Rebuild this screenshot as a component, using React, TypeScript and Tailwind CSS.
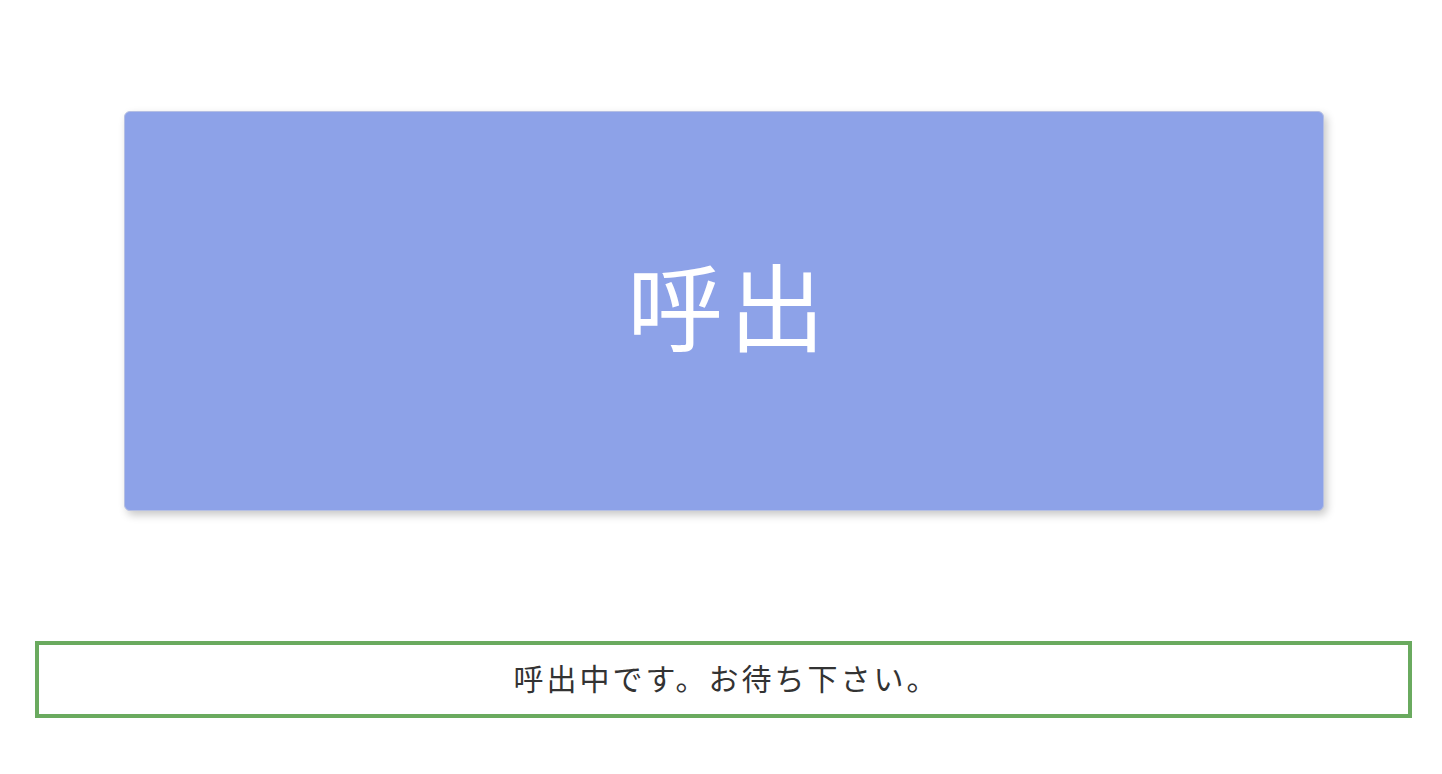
export default function App() {
  return (
    <div
      className="min-h-screen w-full bg-white pt-[111px]"
      style={{ fontFamily: '"Noto Sans CJK JP", "Noto Sans", sans-serif' }}
    >
      {/* Call button */}
      <div className="ml-[124px] w-[1200px]">
        <button
          type="button"
          className="flex h-[400px] w-full items-center justify-center rounded-md border border-[#b5bfe3] bg-[#8da2e8] pb-[16px] pl-[10px] text-[96px] leading-none tracking-[6px] text-white shadow-[3px_4px_8px_rgba(0,0,0,0.22)]"
        >
          呼出
        </button>
      </div>

      {/* Status */}
      <div className="ml-[35px] mt-[130px] flex h-[77px] w-[1377px] items-center justify-center border-4 border-[#6aaa5f] pb-[4px] pl-[6px] text-[30px] tracking-[3px] text-[#333333]">
        呼出中です。お待ち下さい。
      </div>
    </div>
  );
}
